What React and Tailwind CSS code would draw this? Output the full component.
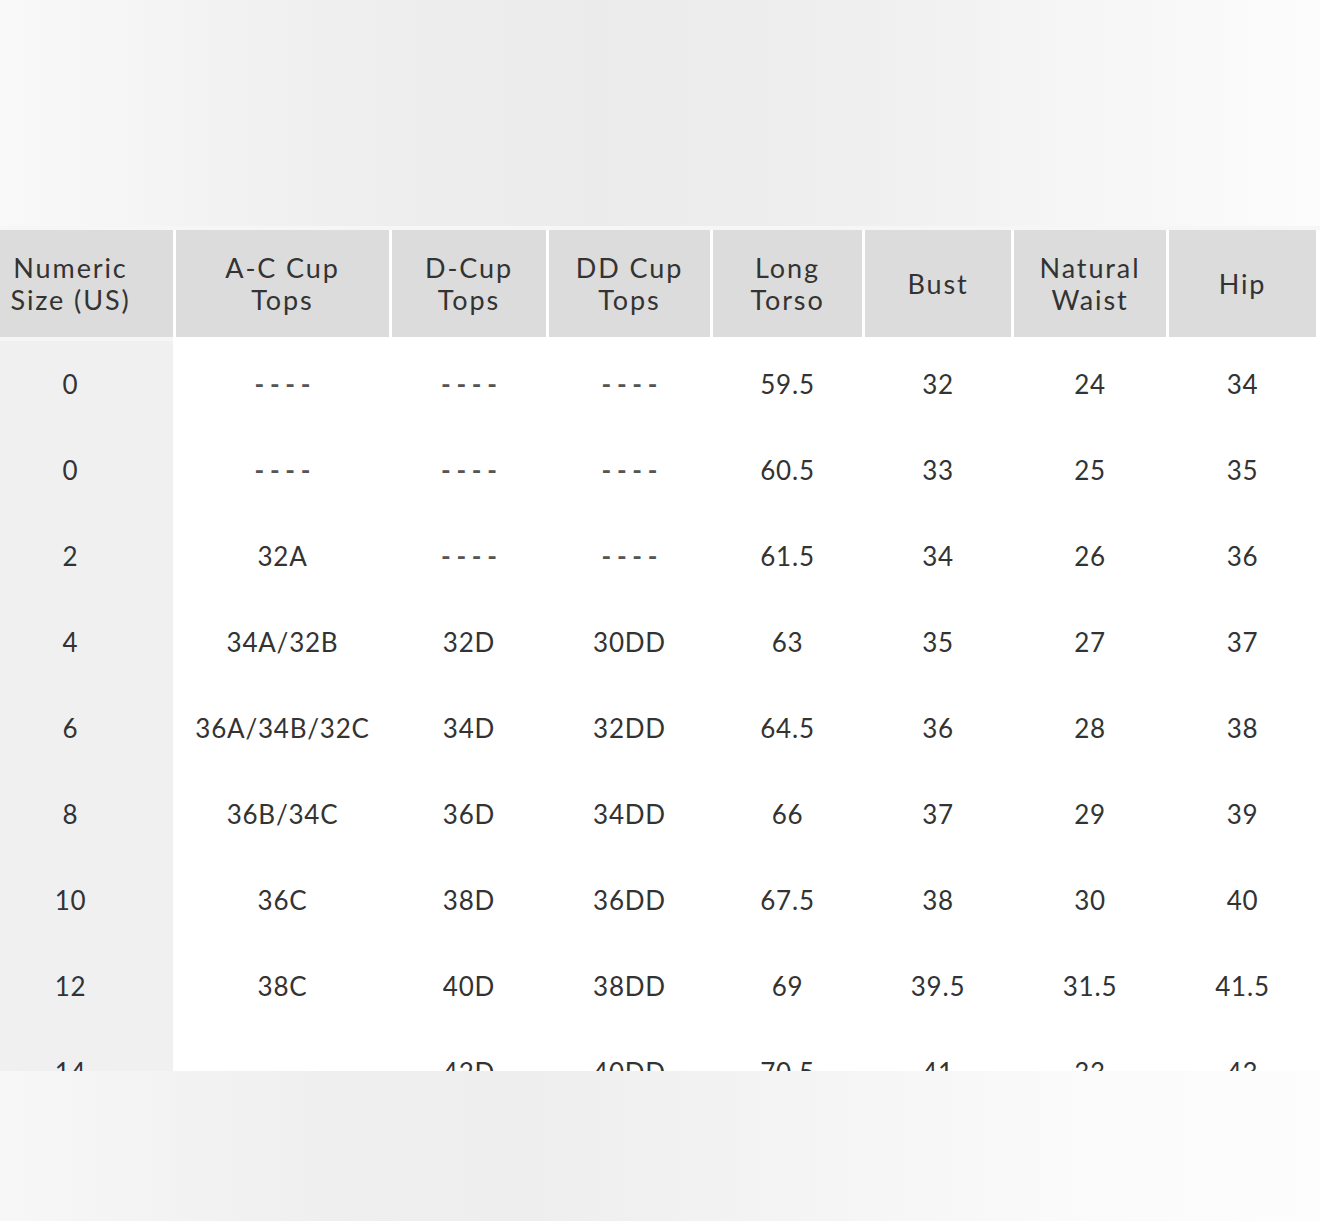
const headers = [
  ['Numeric', 'Size (US)'],
  ['A-C Cup', 'Tops'],
  ['D-Cup', 'Tops'],
  ['DD Cup', 'Tops'],
  ['Long', 'Torso'],
  ['Bust'],
  ['Natural', 'Waist'],
  ['Hip'],
];

const rows = [
  ['0', '----', '----', '----', '59.5', '32', '24', '34'],
  ['0', '----', '----', '----', '60.5', '33', '25', '35'],
  ['2', '32A', '----', '----', '61.5', '34', '26', '36'],
  ['4', '34A/32B', '32D', '30DD', '63', '35', '27', '37'],
  ['6', '36A/34B/32C', '34D', '32DD', '64.5', '36', '28', '38'],
  ['8', '36B/34C', '36D', '34DD', '66', '37', '29', '39'],
  ['10', '36C', '38D', '36DD', '67.5', '38', '30', '40'],
  ['12', '38C', '40D', '38DD', '69', '39.5', '31.5', '41.5'],
  ['14', '----', '42D', '40DD', '70.5', '41', '33', '43'],
];

const cols = 'grid grid-cols-[173px_213px_154px_161px_149px_146px_152px_147px] gap-x-[3px]';

function Cell({ value, first }) {
  const dash = value === '----';
  return (
    <div
      className={`h-[86px] flex items-center justify-center ${first ? 'bg-[#f0f0f0] pr-[32px]' : ''}`}
    >
      <span className={dash ? 'tracking-[0.22em] pl-[0.22em] font-bold text-[#555]' : 'tracking-[0.03em]'}>{value}</span>
    </div>
  );
}

export default function App() {
  return (
    <div className="w-[1320px] h-[1221px] overflow-hidden bg-white text-[#333] font-['Lato','Noto_Sans',sans-serif]">
      {/* blurred top */}
      <div className="h-[226px] bg-[linear-gradient(90deg,#f9f9f9_0%,#efefef_25%,#ebebeb_45%,#efefef_65%,#f6f6f6_82%,#fcfcfc_100%)]" />
      <div className="h-[4px] bg-[#f6f6f6]" />

      {/* table */}
      <div className="h-[841px] overflow-hidden bg-white">
        <div className={cols}>
          {headers.map((h, i) => (
            <div
              key={i}
              className={`h-[107px] bg-[#dcdcdc] flex flex-col items-center justify-center text-[27px] leading-[32px] tracking-[0.07em] ${i === 0 ? 'pr-[32px]' : ''}`}
            >
              {h.map((line) => (
                <span key={line}>{line}</span>
              ))}
            </div>
          ))}
        </div>
        <div className="h-[4px] grid grid-cols-[173px_1fr]">
          <div className="bg-[#f6f6f6]" />
          <div />
        </div>
        {rows.map((r, ri) => (
          <div key={ri} className={`${cols} text-[26px]`}>
            {r.map((v, ci) => (
              <Cell key={ci} value={v} first={ci === 0} />
            ))}
          </div>
        ))}
      </div>

      {/* blurred bottom */}
      <div className="h-[150px] bg-[linear-gradient(90deg,#f7f7f7_0%,#efefef_25%,#eeeeee_40%,#f4f4f4_60%,#fafafa_80%,#fdfdfd_100%)]" />
    </div>
  );
}
